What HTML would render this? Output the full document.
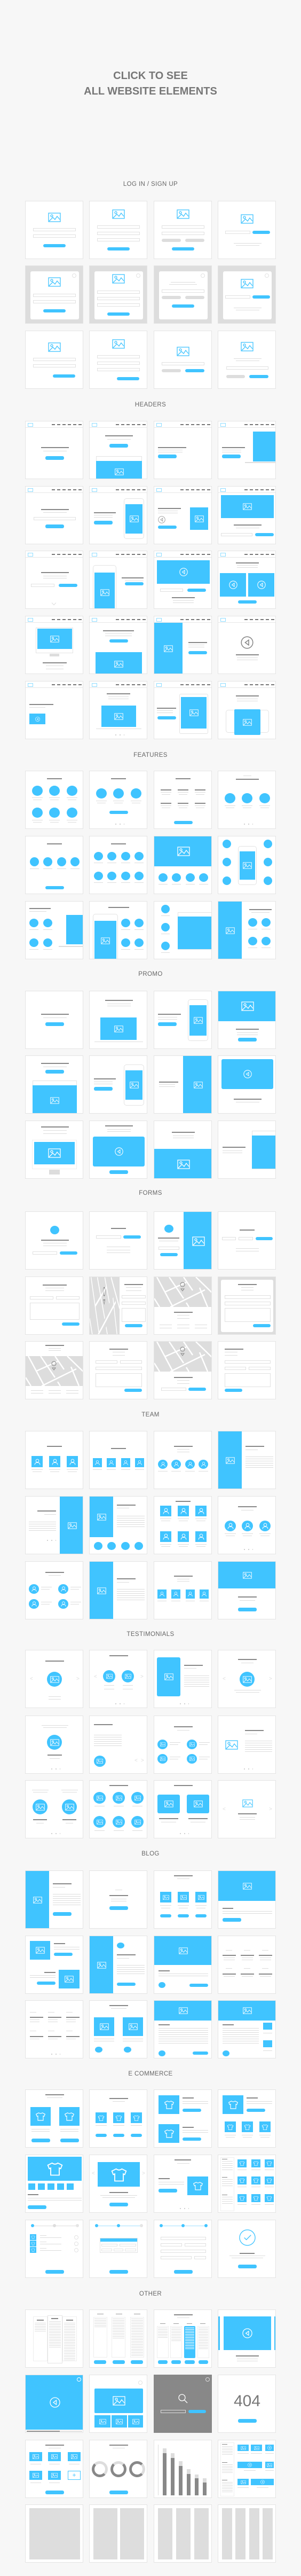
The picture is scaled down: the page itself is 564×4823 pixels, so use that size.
<!DOCTYPE html>
<html><head><meta charset="utf-8"><style>
*{margin:0;padding:0}
body{width:564px;height:4823px;background:#f7f7f7;position:relative;overflow:hidden;font-family:"Liberation Sans",sans-serif}
.h{position:absolute;left:0;width:564px;text-align:center;color:#777;font-weight:bold;font-size:20px;line-height:29px;top:128px}
.lb{position:absolute;left:0;width:564px;text-align:center;color:#666;font-size:11.5px;letter-spacing:.4px;line-height:14px}
.r{position:absolute;left:0;width:564px;height:109px}
.c{position:absolute;top:0;width:109px;height:109px;background:#fff;border:1px solid #e4e4e4;box-sizing:border-box;overflow:hidden}
.x1{left:47px}.x2{left:167px}.x3{left:288px}.x4{left:408px}
.c>*{position:absolute;box-sizing:border-box}
.t{height:2px;background:#888}
.s{height:1px;background:#dcdcdc}
.b{height:6px;border-radius:3px;background:#40c4ff}
.p{height:6px;border-radius:3px;background:#ddd}
.B{background:#40c4ff;display:flex;align-items:center;justify-content:center}
.o{border-radius:50%}
.f{border:1px solid #e0e0e0;height:6px;background:#fff}
.g{background:#ddd}
.k{border:1px solid #e3e3e3;border-radius:5px;background:#fff}
.w{border:1px solid #e3e3e3;background:#fff}
.n{left:0;top:0;width:100%;height:12px;border-bottom:1px solid #e6e6e6;background:repeating-linear-gradient(90deg,#777 0 6px,transparent 6px 10px) 49px 5px/56px 2px no-repeat}
.n::before{content:"";position:absolute;left:4px;top:3px;width:8px;height:5px;border:1px solid #8fdcff}
.ib{width:24px;height:18px;color:#40c4ff}
.im{width:17px;height:13px;color:#fff}
.iL{width:24px;height:18px;color:#fff}
.pl{width:16px;height:16px;color:#fff}
.pe{width:14px;height:14px;color:#fff}
.sh{width:20px;height:17px;color:#fff}
.x{width:8px;height:8px;border:1px solid #e2e2e2;border-radius:50%}
.pop{left:9px;top:10px;width:91px;height:90px;background:#fff;border-radius:3px}
.gray{background:#ddd}
.dt{height:2px;width:20px;background:radial-gradient(circle,#ccc 1px,transparent 1.2px) 0 0/8px 2px repeat-x;left:45px}
</style></head><body>
<svg width="0" height="0" style="position:absolute">
<symbol id="im" viewBox="0 0 24 18"><g fill="none" stroke="currentColor" stroke-width="1.3"><rect x="1" y="1" width="22" height="16"/><circle cx="7" cy="6" r="2"/><polyline points="2,16 9,9 13,13 17,7 22,13"/></g></symbol>
<symbol id="pl" viewBox="0 0 20 20"><g fill="none" stroke="currentColor" stroke-width="1.3"><circle cx="10" cy="10" r="9"/><path d="M12.5 6 L7 10 L12.5 14 Z"/></g></symbol>
<symbol id="pe" viewBox="0 0 20 20"><g fill="none" stroke="currentColor" stroke-width="1.4"><circle cx="10" cy="7" r="4"/><path d="M3 18 C3 13 7 12 10 12 S17 13 17 18"/></g></symbol>
<symbol id="sh" viewBox="0 0 24 20"><path fill="none" stroke="currentColor" stroke-width="1.4" d="M8 2 L2 5 L4 10 L6 9 V19 H18 V9 L20 10 L22 5 L16 2 Q12 5 8 2 Z"/></symbol>
<symbol id="map" viewBox="0 0 109 56" preserveAspectRatio="none"><rect width="109" height="56" fill="#ddd"/><g stroke="#fff" stroke-width="2.5" fill="none"><path d="M5 0 L35 56 M28 0 L55 40 M55 0 L72 25 M78 0 L109 30 M20 28 L60 10 M30 56 L95 24 M0 40 L10 56 M85 20 L100 56 M60 48 L65 56"/></g><path d="M53 18 a4 4 0 1 1 0.1 0 Z M53 26 l-3-4 h6z" fill="none" stroke="#888"/></symbol>
<symbol id="chk" viewBox="0 0 32 32"><g fill="none" stroke="#40c4ff" stroke-width="1.4"><circle cx="16" cy="16" r="15"/><path d="M10 16 L14 20 L23 11"/></g></symbol>
<symbol id="srch" viewBox="0 0 20 20"><g fill="none" stroke="#fff" stroke-width="1.3"><circle cx="8" cy="8" r="6"/><path d="M12.5 12.5 L18 18"/></g></symbol>
</svg>

<div class="h">CLICK TO SEE<br>ALL WEBSITE ELEMENTS</div>

<!-- LOGIN -->
<div class="lb" style="top:338px">LOG IN / SIGN UP</div>
<div class="r" style="top:376px">
<div class="c x1"><svg class="ib" style="left:42px;top:21px"><use href="#im"/></svg><i class="f" style="left:14px;top:50px;width:80px"></i><i class="f" style="left:14px;top:62px;width:80px"></i><i class="b" style="left:33px;top:80px;width:42px"></i></div>
<div class="c x2"><svg class="ib" style="left:42px;top:15px"><use href="#im"/></svg><i class="f" style="left:14px;top:45px;width:80px"></i><i class="f" style="left:14px;top:57px;width:80px"></i><i class="f" style="left:14px;top:69px;width:80px"></i><i class="b" style="left:33px;top:86px;width:42px"></i></div>
<div class="c x3"><svg class="ib" style="left:42px;top:15px"><use href="#im"/></svg><i class="f" style="left:14px;top:45px;width:80px"></i><i class="f" style="left:14px;top:57px;width:80px"></i><i class="p" style="left:14px;top:70px;width:36px"></i><i class="p" style="left:58px;top:70px;width:36px"></i><i class="b" style="left:33px;top:86px;width:42px"></i></div>
<div class="c x4"><svg class="ib" style="left:42px;top:24px"><use href="#im"/></svg><i class="f" style="left:13px;top:55px;width:47px"></i><i class="b" style="left:64px;top:55px;width:33px"></i><i class="s" style="left:29px;top:78px;width:52px"></i><i class="s" style="left:33px;top:82px;width:44px"></i></div>
</div>
<div class="r" style="top:497px">
<div class="c x1 gray"><i class="pop"></i><i class="x" style="left:87px;top:14px"></i><svg class="ib" style="left:42px;top:21px"><use href="#im"/></svg><i class="f" style="left:14px;top:52px;width:80px"></i><i class="f" style="left:14px;top:64px;width:80px"></i><i class="b" style="left:33px;top:81px;width:42px"></i></div>
<div class="c x2 gray"><i class="pop"></i><i class="x" style="left:87px;top:14px"></i><svg class="ib" style="left:42px;top:15px"><use href="#im"/></svg><i class="f" style="left:14px;top:46px;width:80px"></i><i class="f" style="left:14px;top:58px;width:80px"></i><i class="f" style="left:14px;top:70px;width:80px"></i><i class="b" style="left:33px;top:87px;width:42px"></i></div>
<div class="c x3 gray"><i class="pop"></i><i class="x" style="left:87px;top:14px"></i><i class="s" style="left:31px;top:30px;width:46px"></i><i class="s" style="left:28px;top:34px;width:52px"></i><i class="f" style="left:14px;top:44px;width:80px"></i><i class="p" style="left:14px;top:56px;width:36px"></i><i class="p" style="left:58px;top:56px;width:36px"></i><i class="b" style="left:33px;top:72px;width:42px"></i></div>
<div class="c x4 gray"><i class="pop"></i><i class="x" style="left:87px;top:14px"></i><svg class="ib" style="left:42px;top:24px"><use href="#im"/></svg><i class="f" style="left:13px;top:55px;width:47px"></i><i class="b" style="left:64px;top:55px;width:33px"></i><i class="s" style="left:29px;top:78px;width:52px"></i><i class="s" style="left:33px;top:82px;width:44px"></i></div>
</div>
<div class="r" style="top:619px">
<div class="c x1"><svg class="ib" style="left:42px;top:21px"><use href="#im"/></svg><i class="f" style="left:14px;top:50px;width:80px"></i><i class="f" style="left:14px;top:62px;width:80px"></i><i class="b" style="left:51px;top:81px;width:42px"></i></div>
<div class="c x2"><svg class="ib" style="left:42px;top:15px"><use href="#im"/></svg><i class="f" style="left:14px;top:45px;width:80px"></i><i class="f" style="left:14px;top:57px;width:80px"></i><i class="f" style="left:14px;top:69px;width:80px"></i><i class="b" style="left:51px;top:86px;width:42px"></i></div>
<div class="c x3"><svg class="ib" style="left:42px;top:29px"><use href="#im"/></svg><i class="f" style="left:14px;top:58px;width:80px"></i><i class="p" style="left:14px;top:71px;width:36px"></i><i class="b" style="left:58px;top:71px;width:36px"></i></div>
<div class="c x4"><svg class="ib" style="left:42px;top:20px"><use href="#im"/></svg><i class="s" style="left:29px;top:51px;width:52px"></i><i class="s" style="left:33px;top:55px;width:44px"></i><i class="f" style="left:15px;top:66px;width:79px"></i><i class="p" style="left:15px;top:82px;width:35px"></i><i class="b" style="left:58px;top:82px;width:36px"></i></div>
</div>

<!-- HEADERS -->
<div class="lb" style="top:751px">HEADERS</div>
<div class="r" style="top:788px">
<div class="c x1"><i class="n"></i><i class="t" style="left:29px;top:48px;width:52px"></i><i class="s" style="left:33px;top:55px;width:44px"></i><i class="b" style="left:37px;top:65px;width:35px;height:7px"></i></div>
<div class="c x2"><i class="n"></i><i class="t" style="left:29px;top:26px;width:52px"></i><i class="s" style="left:33px;top:33px;width:44px"></i><i class="b" style="left:37px;top:42px;width:35px;height:7px"></i><i class="w" style="left:12px;top:65px;width:86px;height:50px"></i><i class="B" style="left:12px;top:74px;width:86px;height:40px"><svg class="im"><use href="#im"/></svg></i></div>
<div class="c x3"><i class="n"></i><i class="t" style="left:7px;top:48px;width:53px"></i><i class="s" style="left:7px;top:53px;width:46px"></i><i class="s" style="left:7px;top:57px;width:46px"></i><i class="b" style="left:7px;top:62px;width:35px;height:7px"></i></div>
<div class="c x4"><i class="n"></i><i class="t" style="left:7px;top:48px;width:43px"></i><i class="s" style="left:7px;top:53px;width:36px"></i><i class="s" style="left:7px;top:57px;width:36px"></i><i class="b" style="left:7px;top:62px;width:35px;height:7px"></i><i class="B" style="left:65px;top:19px;width:45px;height:56px"></i><i class="g" style="left:50px;top:76px;width:60px;height:2px"></i></div>
</div>
<div class="r" style="top:910px">
<div class="c x1"><i class="n"></i><i class="t" style="left:29px;top:42px;width:52px"></i><i class="s" style="left:33px;top:48px;width:44px"></i><i class="f" style="left:15px;top:57px;width:79px"></i><i class="b" style="left:37px;top:71px;width:35px;height:7px"></i></div>
<div class="c x2"><i class="n"></i><i class="t" style="left:8px;top:48px;width:41px"></i><i class="s" style="left:8px;top:53px;width:35px"></i><i class="s" style="left:8px;top:57px;width:35px"></i><i class="b" style="left:8px;top:64px;width:35px;height:7px"></i><i class="k" style="left:64px;top:22px;width:38px;height:76px"></i><i class="B" style="left:67px;top:33px;width:32px;height:55px"><svg class="im"><use href="#im"/></svg></i></div>
<div class="c x3"><i class="n"></i><i class="t" style="left:7px;top:40px;width:43px"></i><i class="s" style="left:7px;top:45px;width:37px"></i><i class="s" style="left:7px;top:49px;width:37px"></i><svg class="pl" style="left:7px;top:55px;width:14px;height:14px;color:#999"><use href="#pl"/></svg><i class="b" style="left:7px;top:73px;width:35px"></i><i class="B" style="left:67px;top:39px;width:34px;height:42px"><svg class="im"><use href="#im"/></svg></i></div>
<div class="c x4"><i class="n"></i><i class="B" style="left:5px;top:16px;width:99px;height:43px"><svg class="im"><use href="#im"/></svg></i><i class="t" style="left:29px;top:71px;width:52px"></i><i class="s" style="left:33px;top:77px;width:44px"></i><i class="f" style="left:5px;top:87px;width:59px"></i><i class="b" style="left:69px;top:87px;width:35px"></i></div>
</div>
<div class="r" style="top:1031px">
<div class="c x1"><i class="n"></i><i class="t" style="left:29px;top:39px;width:52px"></i><i class="s" style="left:33px;top:46px;width:44px"></i><i class="s" style="left:33px;top:50px;width:44px"></i><i class="f" style="left:10px;top:61px;width:44px"></i><i class="b" style="left:62px;top:61px;width:35px"></i><i style="left:50px;top:94px;width:6px;height:6px;border-right:1px solid #ddd;border-bottom:1px solid #ddd;transform:rotate(45deg)"></i></div>
<div class="c x2"><i class="n"></i><i class="k" style="left:6px;top:26px;width:44px;height:90px"></i><i class="B" style="left:9px;top:40px;width:38px;height:75px"><svg class="im"><use href="#im"/></svg></i><i class="t" style="left:60px;top:49px;width:41px"></i><i class="s" style="left:66px;top:55px;width:35px"></i><i class="b" style="left:66px;top:58px;width:35px"></i></div>
<div class="c x3"><i class="n"></i><i class="B" style="left:5px;top:17px;width:99px;height:44px"><svg class="pl"><use href="#pl"/></svg></i><i class="f" style="left:11px;top:70px;width:43px"></i><i class="b" style="left:62px;top:70px;width:35px"></i><i class="t" style="left:33px;top:86px;width:43px"></i><i class="s" style="left:35px;top:92px;width:39px"></i><i class="s" style="left:35px;top:96px;width:39px"></i></div>
<div class="c x4"><i class="n"></i><i class="t" style="left:33px;top:21px;width:43px"></i><i class="s" style="left:35px;top:26px;width:39px"></i><i class="s" style="left:35px;top:30px;width:39px"></i><i class="B" style="left:3px;top:41px;width:49px;height:44px"><svg class="pl"><use href="#pl"/></svg></i><i class="B" style="left:56px;top:41px;width:49px;height:44px"><svg class="pl"><use href="#pl"/></svg></i><i class="b" style="left:37px;top:92px;width:35px"></i></div>
</div>
<div class="r" style="top:1153px">
<div class="c x1"><i class="n"></i><i class="w" style="left:19px;top:21px;width:70px;height:48px"></i><i class="B" style="left:22px;top:23px;width:65px;height:38px"><svg class="im"><use href="#im"/></svg></i><i class="g" style="left:45px;top:70px;width:18px;height:5px"></i><i class="t" style="left:32px;top:86px;width:45px"></i><i class="s" style="left:38px;top:92px;width:33px"></i><i class="s" style="left:38px;top:98px;width:33px"></i></div>
<div class="c x2"><i class="n"></i><i class="t" style="left:25px;top:26px;width:58px"></i><i class="s" style="left:29px;top:32px;width:50px"></i><i class="s" style="left:29px;top:36px;width:50px"></i><i class="b" style="left:37px;top:43px;width:35px"></i><i class="B" style="left:11px;top:67px;width:87px;height:44px"><svg class="im"><use href="#im"/></svg></i></div>
<div class="c x3"><i class="n"></i><i class="B" style="left:0;top:12px;width:53px;height:97px"><svg class="im"><use href="#im"/></svg></i><i class="t" style="left:64px;top:48px;width:35px"></i><i class="s" style="left:64px;top:53px;width:30px"></i><i class="s" style="left:64px;top:57px;width:30px"></i><i class="b" style="left:64px;top:65px;width:35px"></i></div>
<div class="c x4"><i class="n"></i><svg style="left:42px;top:37px;width:24px;height:24px;color:#888"><use href="#pl"/></svg><i class="t" style="left:33px;top:71px;width:43px"></i><i class="s" style="left:35px;top:77px;width:39px"></i><i class="s" style="left:35px;top:81px;width:39px"></i></div>
</div>
<div class="r" style="top:1275px">
<div class="c x1"><i class="n"></i><i class="t" style="left:7px;top:42px;width:45px"></i><i class="s" style="left:7px;top:48px;width:30px"></i><i class="B" style="left:7px;top:60px;width:30px;height:20px"><svg class="pl" style="width:9px;height:9px"><use href="#pl"/></svg></i></div>
<div class="c x2"><i class="n"></i><i class="t" style="left:32px;top:22px;width:44px"></i><i class="s" style="left:35px;top:28px;width:38px"></i><i class="s" style="left:35px;top:32px;width:38px"></i><i class="B" style="left:22px;top:45px;width:65px;height:40px"><svg class="im"><use href="#im"/></svg></i><i class="s" style="left:12px;top:88px;width:85px"></i><i class="dt" style="top:99px"></i></div>
<div class="c x3"><i class="n"></i><i class="t" style="left:5px;top:49px;width:36px"></i><i class="s" style="left:5px;top:54px;width:30px"></i><i class="s" style="left:5px;top:58px;width:30px"></i><i class="b" style="left:6px;top:65px;width:35px"></i><i class="k" style="left:47px;top:23px;width:54px;height:75px;border-radius:3px"></i><i class="B" style="left:50px;top:29px;width:48px;height:59px"><svg class="im"><use href="#im"/></svg></i></div>
<div class="c x4"><i class="n"></i><i class="t" style="left:33px;top:26px;width:43px"></i><i class="s" style="left:35px;top:32px;width:39px"></i><i class="s" style="left:35px;top:36px;width:39px"></i><i class="k" style="left:14px;top:53px;width:81px;height:43px"></i><i class="B" style="left:30px;top:52px;width:49px;height:48px;border-radius:2px"><svg class="im"><use href="#im"/></svg></i></div>
</div>

<!-- FEATURES -->
<div class="lb" style="top:1407px">FEATURES</div>
<div class="r" style="top:1443px">
<div class="c x1"><i class="t" style="left:40px;top:13px;width:28px"></i>
<i class="B o" style="left:12px;top:27px;width:20px;height:19px"></i><i class="B o" style="left:44px;top:27px;width:20px;height:19px"></i><i class="B o" style="left:77px;top:27px;width:20px;height:19px"></i>
<i class="s" style="left:12px;top:49px;width:20px"></i><i class="s" style="left:44px;top:49px;width:20px"></i><i class="s" style="left:77px;top:49px;width:20px"></i><i class="s" style="left:14px;top:53px;width:16px"></i><i class="s" style="left:46px;top:53px;width:16px"></i><i class="s" style="left:79px;top:53px;width:16px"></i>
<i class="B o" style="left:12px;top:68px;width:20px;height:19px"></i><i class="B o" style="left:44px;top:68px;width:20px;height:19px"></i><i class="B o" style="left:77px;top:68px;width:20px;height:19px"></i>
<i class="s" style="left:12px;top:91px;width:20px"></i><i class="s" style="left:44px;top:91px;width:20px"></i><i class="s" style="left:77px;top:91px;width:20px"></i><i class="s" style="left:14px;top:95px;width:16px"></i><i class="s" style="left:46px;top:95px;width:16px"></i><i class="s" style="left:79px;top:95px;width:16px"></i></div>
<div class="c x2"><i class="t" style="left:40px;top:13px;width:28px"></i><i class="B o" style="left:12px;top:32px;width:20px;height:19px"></i><i class="B o" style="left:44px;top:32px;width:20px;height:19px"></i><i class="B o" style="left:77px;top:32px;width:20px;height:19px"></i><i class="s" style="left:12px;top:55px;width:20px"></i><i class="s" style="left:44px;top:55px;width:20px"></i><i class="s" style="left:77px;top:55px;width:20px"></i><i class="s" style="left:14px;top:59px;width:16px"></i><i class="s" style="left:46px;top:59px;width:16px"></i><i class="s" style="left:79px;top:59px;width:16px"></i><i class="b" style="left:37px;top:74px;width:35px"></i><i class="dt" style="top:98px"></i></div>
<div class="c x3"><i class="t" style="left:40px;top:13px;width:28px"></i><i class="t" style="left:12px;top:34px;width:20px"></i><i class="t" style="left:44px;top:34px;width:20px"></i><i class="t" style="left:76px;top:34px;width:20px"></i><i class="s" style="left:12px;top:39px;width:20px"></i><i class="s" style="left:44px;top:39px;width:20px"></i><i class="s" style="left:76px;top:39px;width:20px"></i><i class="s" style="left:14px;top:43px;width:16px"></i><i class="s" style="left:46px;top:43px;width:16px"></i><i class="s" style="left:78px;top:43px;width:16px"></i><i class="t" style="left:12px;top:59px;width:20px"></i><i class="t" style="left:44px;top:59px;width:20px"></i><i class="t" style="left:76px;top:59px;width:20px"></i><i class="s" style="left:12px;top:64px;width:20px"></i><i class="s" style="left:44px;top:64px;width:20px"></i><i class="s" style="left:76px;top:64px;width:20px"></i><i class="s" style="left:14px;top:68px;width:16px"></i><i class="s" style="left:46px;top:68px;width:16px"></i><i class="s" style="left:78px;top:68px;width:16px"></i><i class="b" style="left:37px;top:93px;width:35px"></i></div>
<div class="c x4"><i class="s" style="left:47px;top:8px;width:15px"></i><i class="t" style="left:33px;top:14px;width:43px"></i><i class="B o" style="left:12px;top:41px;width:20px;height:19px"></i><i class="B o" style="left:44px;top:41px;width:20px;height:19px"></i><i class="B o" style="left:77px;top:41px;width:20px;height:19px"></i><i class="s" style="left:12px;top:64px;width:20px"></i><i class="s" style="left:44px;top:64px;width:20px"></i><i class="s" style="left:77px;top:64px;width:20px"></i><i class="s" style="left:14px;top:68px;width:16px"></i><i class="s" style="left:46px;top:68px;width:16px"></i><i class="s" style="left:79px;top:68px;width:16px"></i><i class="dt" style="top:98px"></i></div>
</div>
<div class="r" style="top:1565px">
<div class="c x1"><i class="t" style="left:40px;top:13px;width:28px"></i><i class="B o" style="left:8px;top:39px;width:17px;height:17px"></i><i class="B o" style="left:33px;top:39px;width:17px;height:17px"></i><i class="B o" style="left:59px;top:39px;width:17px;height:17px"></i><i class="B o" style="left:84px;top:39px;width:17px;height:17px"></i><i class="s" style="left:8px;top:60px;width:17px"></i><i class="s" style="left:33px;top:60px;width:17px"></i><i class="s" style="left:59px;top:60px;width:17px"></i><i class="s" style="left:84px;top:60px;width:17px"></i><i class="b" style="left:37px;top:93px;width:35px"></i></div>
<div class="c x2"><i class="t" style="left:40px;top:13px;width:28px"></i><i class="B o" style="left:8px;top:29px;width:17px;height:16px"></i><i class="B o" style="left:33px;top:29px;width:17px;height:16px"></i><i class="B o" style="left:59px;top:29px;width:17px;height:16px"></i><i class="B o" style="left:84px;top:29px;width:17px;height:16px"></i><i class="s" style="left:8px;top:49px;width:17px"></i><i class="s" style="left:33px;top:49px;width:17px"></i><i class="s" style="left:59px;top:49px;width:17px"></i><i class="s" style="left:84px;top:49px;width:17px"></i><i class="B o" style="left:8px;top:66px;width:17px;height:16px"></i><i class="B o" style="left:33px;top:66px;width:17px;height:16px"></i><i class="B o" style="left:59px;top:66px;width:17px;height:16px"></i><i class="B o" style="left:84px;top:66px;width:17px;height:16px"></i><i class="s" style="left:8px;top:86px;width:17px"></i><i class="s" style="left:33px;top:86px;width:17px"></i><i class="s" style="left:59px;top:86px;width:17px"></i><i class="s" style="left:84px;top:86px;width:17px"></i></div>
<div class="c x3"><i class="B" style="left:0;top:0;width:109px;height:56px"><svg class="iL"><use href="#im"/></svg></i><i class="B o" style="left:8px;top:69px;width:17px;height:16px"></i><i class="B o" style="left:33px;top:69px;width:17px;height:16px"></i><i class="B o" style="left:59px;top:69px;width:17px;height:16px"></i><i class="B o" style="left:84px;top:69px;width:17px;height:16px"></i><i class="s" style="left:8px;top:89px;width:17px"></i><i class="s" style="left:33px;top:89px;width:17px"></i><i class="s" style="left:59px;top:89px;width:17px"></i><i class="s" style="left:84px;top:89px;width:17px"></i></div>
<div class="c x4"><i class="k" style="left:37px;top:18px;width:35px;height:73px"></i><i class="B" style="left:40px;top:28px;width:29px;height:53px"><svg class="im"><use href="#im"/></svg></i><i class="B o" style="left:8px;top:6px;width:16px;height:16px"></i><i class="B o" style="left:8px;top:40px;width:16px;height:16px"></i><i class="B o" style="left:8px;top:75px;width:16px;height:16px"></i><i class="B o" style="left:85px;top:6px;width:16px;height:16px"></i><i class="B o" style="left:85px;top:40px;width:16px;height:16px"></i><i class="B o" style="left:85px;top:75px;width:16px;height:16px"></i></div>
</div>
<div class="r" style="top:1687px">
<div class="c x1"><i class="t" style="left:7px;top:12px;width:40px"></i><i class="s" style="left:7px;top:18px;width:32px"></i><i class="B o" style="left:7px;top:32px;width:17px;height:16px"></i><i class="B o" style="left:33px;top:32px;width:17px;height:16px"></i><i class="B o" style="left:7px;top:69px;width:17px;height:16px"></i><i class="B o" style="left:33px;top:69px;width:17px;height:16px"></i><i class="s" style="left:7px;top:52px;width:17px"></i><i class="s" style="left:33px;top:52px;width:17px"></i><i class="s" style="left:7px;top:89px;width:17px"></i><i class="s" style="left:33px;top:89px;width:17px"></i><i class="B" style="left:76px;top:25px;width:34px;height:55px"></i><i class="g" style="left:62px;top:83px;width:48px;height:2px"></i></div>
<div class="c x2"><i class="k" style="left:6px;top:23px;width:47px;height:95px"></i><i class="B" style="left:9px;top:36px;width:41px;height:75px"><svg class="im"><use href="#im"/></svg></i><i class="t" style="left:35px;top:10px;width:39px"></i><i class="B o" style="left:59px;top:32px;width:17px;height:16px"></i><i class="B o" style="left:84px;top:32px;width:17px;height:16px"></i><i class="B o" style="left:59px;top:69px;width:17px;height:16px"></i><i class="B o" style="left:84px;top:69px;width:17px;height:16px"></i><i class="s" style="left:59px;top:52px;width:17px"></i><i class="s" style="left:84px;top:52px;width:17px"></i><i class="s" style="left:59px;top:89px;width:17px"></i><i class="s" style="left:84px;top:89px;width:17px"></i></div>
<div class="c x3"><i class="B o" style="left:13px;top:6px;width:16px;height:16px"></i><i class="B o" style="left:13px;top:40px;width:16px;height:16px"></i><i class="B o" style="left:13px;top:75px;width:16px;height:16px"></i><i class="s" style="left:13px;top:26px;width:16px"></i><i class="s" style="left:13px;top:60px;width:16px"></i><i class="s" style="left:13px;top:95px;width:16px"></i><i class="w" style="left:44px;top:20px;width:66px;height:70px"></i><i class="B" style="left:44px;top:28px;width:66px;height:61px"></i></div>
<div class="c x4"><i class="B" style="left:0;top:0;width:44px;height:109px"><svg class="im"><use href="#im"/></svg></i><i class="t" style="left:58px;top:14px;width:42px"></i><i class="s" style="left:62px;top:20px;width:34px"></i><i class="B o" style="left:56px;top:31px;width:17px;height:16px"></i><i class="B o" style="left:81px;top:31px;width:17px;height:16px"></i><i class="B o" style="left:56px;top:66px;width:17px;height:16px"></i><i class="B o" style="left:81px;top:66px;width:17px;height:16px"></i><i class="s" style="left:56px;top:51px;width:17px"></i><i class="s" style="left:81px;top:51px;width:17px"></i><i class="s" style="left:56px;top:86px;width:17px"></i><i class="s" style="left:81px;top:86px;width:17px"></i></div>
</div>

<!-- PROMO -->
<div class="lb" style="top:1817px">PROMO</div>
<div class="r" style="top:1855px">
<div class="c x1"><i class="t" style="left:29px;top:42px;width:52px"></i><i class="s" style="left:33px;top:49px;width:44px"></i><i class="b" style="left:37px;top:58px;width:35px;height:7px"></i></div>
<div class="c x2"><i class="t" style="left:29px;top:16px;width:52px"></i><i class="s" style="left:33px;top:23px;width:44px"></i><i class="s" style="left:33px;top:27px;width:44px"></i><i class="B" style="left:20px;top:49px;width:68px;height:42px"><svg class="im"><use href="#im"/></svg></i><i class="g" style="left:9px;top:94px;width:91px;height:1px"></i></div>
<div class="c x3"><i class="t" style="left:7px;top:42px;width:43px"></i><i class="s" style="left:7px;top:48px;width:36px"></i><i class="s" style="left:7px;top:52px;width:36px"></i><i class="b" style="left:7px;top:58px;width:35px;height:7px"></i><i class="k" style="left:63px;top:15px;width:38px;height:78px"></i><i class="B" style="left:66px;top:26px;width:32px;height:57px"><svg class="im"><use href="#im"/></svg></i></div>
<div class="c x4"><i class="B" style="left:0;top:0;width:109px;height:56px"><svg class="iL"><use href="#im"/></svg></i><i class="t" style="left:33px;top:70px;width:43px"></i><i class="s" style="left:35px;top:77px;width:39px"></i><i class="s" style="left:35px;top:81px;width:39px"></i><i class="b" style="left:37px;top:87px;width:35px;height:7px"></i></div>
</div>
<div class="r" style="top:1976px">
<div class="c x1"><i class="t" style="left:29px;top:13px;width:52px"></i><i class="s" style="left:33px;top:20px;width:44px"></i><i class="b" style="left:37px;top:26px;width:35px;height:7px"></i><i class="w" style="left:13px;top:46px;width:83px;height:66px"></i><i class="B" style="left:13px;top:55px;width:83px;height:56px"><svg class="im"><use href="#im"/></svg></i></div>
<div class="c x2"><i class="t" style="left:8px;top:42px;width:41px"></i><i class="s" style="left:8px;top:48px;width:35px"></i><i class="s" style="left:8px;top:52px;width:35px"></i><i class="b" style="left:8px;top:58px;width:35px;height:7px"></i><i class="k" style="left:64px;top:16px;width:38px;height:77px"></i><i class="B" style="left:67px;top:27px;width:32px;height:55px"><svg class="im"><use href="#im"/></svg></i></div>
<div class="c x3"><i class="t" style="left:9px;top:48px;width:36px"></i><i class="s" style="left:9px;top:53px;width:30px"></i><i class="s" style="left:9px;top:57px;width:30px"></i><i class="B" style="left:54px;top:0;width:56px;height:109px"><svg class="im"><use href="#im"/></svg></i></div>
<div class="c x4"><i class="B" style="left:6px;top:6px;width:97px;height:56px;border-radius:3px"><svg class="pl"><use href="#pl"/></svg></i><i class="t" style="left:29px;top:80px;width:52px"></i><i class="s" style="left:33px;top:86px;width:44px"></i></div>
</div>
<div class="r" style="top:2098px">
<div class="c x1"><i class="t" style="left:29px;top:10px;width:52px"></i><i class="s" style="left:33px;top:17px;width:44px"></i><i class="s" style="left:33px;top:23px;width:44px"></i><i class="w" style="left:12px;top:35px;width:84px;height:55px;border-color:#eee"></i><i class="B" style="left:16px;top:39px;width:76px;height:42px"><svg class="iL"><use href="#im"/></svg></i><i class="g" style="left:44px;top:91px;width:20px;height:9px"></i></div>
<div class="c x2"><i class="t" style="left:29px;top:8px;width:52px"></i><i class="s" style="left:33px;top:15px;width:44px"></i><i class="s" style="left:33px;top:19px;width:44px"></i><i class="B" style="left:6px;top:29px;width:97px;height:56px;border-radius:3px"><svg class="pl"><use href="#pl"/></svg></i><i class="b" style="left:37px;top:92px;width:35px;height:7px"></i></div>
<div class="c x3"><i class="t" style="left:33px;top:20px;width:43px"></i><i class="s" style="left:35px;top:27px;width:39px"></i><i class="s" style="left:35px;top:31px;width:39px"></i><i class="B" style="left:0;top:52px;width:109px;height:57px"><svg class="iL"><use href="#im"/></svg></i></div>
<div class="c x4"><i class="w" style="left:63px;top:18px;width:47px;height:72px"></i><i class="B" style="left:63px;top:27px;width:47px;height:62px"></i><i class="t" style="left:8px;top:48px;width:43px"></i><i class="s" style="left:8px;top:55px;width:37px"></i><i class="s" style="left:8px;top:59px;width:37px"></i></div>
</div>

<!-- FORMS -->
<div class="lb" style="top:2227px">FORMS</div>
<div class="r" style="top:2268px">
<div class="c x1"><i class="B o" style="left:46px;top:26px;width:17px;height:16px"></i><i class="t" style="left:29px;top:52px;width:52px"></i><i class="s" style="left:33px;top:58px;width:44px"></i><i class="s" style="left:33px;top:63px;width:44px"></i><i class="f" style="left:13px;top:74px;width:46px"></i><i class="b" style="left:64px;top:74px;width:33px"></i></div>
<div class="c x2"><i class="t" style="left:40px;top:30px;width:28px"></i><i class="f" style="left:12px;top:44px;width:47px"></i><i class="b" style="left:63px;top:44px;width:33px"></i><i class="s" style="left:32px;top:65px;width:44px"></i><i class="s" style="left:32px;top:71px;width:44px"></i><i class="s" style="left:32px;top:76px;width:44px"></i></div>
<div class="c x3"><i class="B" style="left:55px;top:0;width:55px;height:109px"><svg class="iL"><use href="#im"/></svg></i><i class="B o" style="left:19px;top:24px;width:17px;height:15px"></i><i class="t" style="left:7px;top:48px;width:40px"></i><i class="s" style="left:9px;top:54px;width:36px"></i><i class="f" style="left:8px;top:65px;width:39px"></i><i class="b" style="left:11px;top:77px;width:33px"></i></div>
<div class="c x4"><i class="t" style="left:40px;top:33px;width:28px"></i><i class="f" style="left:7px;top:47px;width:26px"></i><i class="f" style="left:38px;top:47px;width:27px"></i><i class="b" style="left:70px;top:47px;width:32px"></i><i class="s" style="left:33px;top:68px;width:43px"></i><i class="s" style="left:33px;top:73px;width:43px"></i></div>
</div>
<div class="r" style="top:2390px">
<div class="c x1"><i class="t" style="left:32px;top:14px;width:45px"></i><i class="s" style="left:37px;top:20px;width:35px"></i><i class="s" style="left:37px;top:25px;width:35px"></i><i class="f" style="left:8px;top:36px;width:44px"></i><i class="f" style="left:57px;top:36px;width:44px"></i><i class="f" style="left:8px;top:48px;width:93px;height:32px"></i><i class="b" style="left:68px;top:85px;width:33px"></i></div>
<div class="c x2"><svg style="left:0;top:0;width:56px;height:109px"><use href="#map"/></svg><i class="t" style="left:65px;top:13px;width:35px"></i><i class="s" style="left:68px;top:19px;width:29px"></i><i class="s" style="left:68px;top:25px;width:29px"></i><i class="f" style="left:60px;top:34px;width:45px"></i><i class="f" style="left:60px;top:46px;width:45px"></i><i class="f" style="left:60px;top:58px;width:45px;height:26px"></i><i class="b" style="left:66px;top:88px;width:33px"></i></div>
<div class="c x3"><svg style="left:0;top:0;width:109px;height:56px"><use href="#map"/></svg><i class="t" style="left:37px;top:65px;width:35px"></i><i class="s" style="left:43px;top:71px;width:23px"></i><i class="s" style="left:43px;top:77px;width:23px"></i><i class="s" style="left:10px;top:89px;width:23px"></i><i class="s" style="left:43px;top:89px;width:23px"></i><i class="s" style="left:76px;top:89px;width:23px"></i><i class="s" style="left:10px;top:95px;width:23px"></i><i class="s" style="left:43px;top:95px;width:23px"></i><i class="s" style="left:76px;top:95px;width:23px"></i></div>
<div class="c x4 gray"><i style="left:5px;top:5px;width:98px;height:98px;background:#fff;border-radius:3px"></i><i class="t" style="left:37px;top:13px;width:35px"></i><i class="s" style="left:43px;top:19px;width:23px"></i><i class="s" style="left:43px;top:24px;width:23px"></i><i class="f" style="left:12px;top:34px;width:86px;height:7px"></i><i class="f" style="left:12px;top:46px;width:86px;height:7px"></i><i class="f" style="left:12px;top:58px;width:86px;height:26px"></i><i class="b" style="left:65px;top:88px;width:33px"></i></div>
</div>
<div class="r" style="top:2511px">
<div class="c x1"><i class="t" style="left:37px;top:6px;width:35px"></i><i class="s" style="left:43px;top:12px;width:23px"></i><i class="s" style="left:43px;top:16px;width:23px"></i><svg style="left:0;top:27px;width:109px;height:56px"><use href="#map"/></svg><i class="s" style="left:10px;top:91px;width:23px"></i><i class="s" style="left:43px;top:91px;width:23px"></i><i class="s" style="left:76px;top:91px;width:23px"></i><i class="s" style="left:10px;top:96px;width:23px"></i><i class="s" style="left:43px;top:96px;width:23px"></i><i class="s" style="left:76px;top:96px;width:23px"></i></div>
<div class="c x2"><i class="t" style="left:37px;top:13px;width:35px"></i><i class="s" style="left:43px;top:19px;width:23px"></i><i class="s" style="left:43px;top:25px;width:23px"></i><i class="f" style="left:11px;top:35px;width:41px"></i><i class="f" style="left:57px;top:35px;width:41px"></i><i class="f" style="left:11px;top:47px;width:87px"></i><i class="f" style="left:11px;top:59px;width:87px;height:26px"></i><i class="b" style="left:65px;top:88px;width:33px"></i></div>
<div class="c x3"><svg style="left:0;top:0;width:109px;height:56px"><use href="#map"/></svg><i class="t" style="left:37px;top:66px;width:35px"></i><i class="s" style="left:43px;top:72px;width:23px"></i><i class="s" style="left:43px;top:78px;width:23px"></i><i class="f" style="left:13px;top:86px;width:47px"></i><i class="b" style="left:64px;top:86px;width:33px"></i></div>
<div class="c x4"><i class="t" style="left:12px;top:13px;width:35px"></i><i class="s" style="left:12px;top:19px;width:24px"></i><i class="s" style="left:12px;top:25px;width:24px"></i><i class="f" style="left:12px;top:35px;width:86px"></i><i class="f" style="left:12px;top:47px;width:40px"></i><i class="f" style="left:57px;top:47px;width:41px"></i><i class="f" style="left:12px;top:59px;width:86px;height:26px"></i><i class="b" style="left:12px;top:88px;width:33px"></i></div>
</div>

<!-- TEAM -->
<div class="lb" style="top:2642px">TEAM</div>
<div class="r" style="top:2679px">
<div class="c x1"><i class="t" style="left:40px;top:27px;width:28px"></i><i class="B" style="left:11px;top:46px;width:21px;height:21px"><svg class="pe"><use href="#pe"/></svg></i><i class="B" style="left:44px;top:46px;width:21px;height:21px"><svg class="pe"><use href="#pe"/></svg></i><i class="B" style="left:77px;top:46px;width:21px;height:21px"><svg class="pe"><use href="#pe"/></svg></i><i class="s" style="left:11px;top:71px;width:21px"></i><i class="s" style="left:44px;top:71px;width:21px"></i><i class="s" style="left:77px;top:71px;width:21px"></i><i class="s" style="left:13px;top:75px;width:17px"></i><i class="s" style="left:46px;top:75px;width:17px"></i><i class="s" style="left:79px;top:75px;width:17px"></i></div>
<div class="c x2"><i class="t" style="left:40px;top:31px;width:28px"></i><i class="B" style="left:6px;top:50px;width:17px;height:17px"><svg class="pe" style="width:11px;height:11px"><use href="#pe"/></svg></i><i class="B" style="left:32px;top:50px;width:17px;height:17px"><svg class="pe" style="width:11px;height:11px"><use href="#pe"/></svg></i><i class="B" style="left:59px;top:50px;width:17px;height:17px"><svg class="pe" style="width:11px;height:11px"><use href="#pe"/></svg></i><i class="B" style="left:85px;top:50px;width:17px;height:17px"><svg class="pe" style="width:11px;height:11px"><use href="#pe"/></svg></i><i class="s" style="left:6px;top:71px;width:17px"></i><i class="s" style="left:32px;top:71px;width:17px"></i><i class="s" style="left:59px;top:71px;width:17px"></i><i class="s" style="left:85px;top:71px;width:17px"></i></div>
<div class="c x3"><i class="t" style="left:37px;top:27px;width:35px"></i><i class="s" style="left:43px;top:33px;width:23px"></i><i class="s" style="left:43px;top:38px;width:23px"></i><i class="B o" style="left:7px;top:53px;width:18px;height:17px"><svg class="pe" style="width:11px;height:11px"><use href="#pe"/></svg></i><i class="B o" style="left:32px;top:53px;width:18px;height:17px"><svg class="pe" style="width:11px;height:11px"><use href="#pe"/></svg></i><i class="B o" style="left:58px;top:53px;width:18px;height:17px"><svg class="pe" style="width:11px;height:11px"><use href="#pe"/></svg></i><i class="B o" style="left:83px;top:53px;width:18px;height:17px"><svg class="pe" style="width:11px;height:11px"><use href="#pe"/></svg></i><i class="s" style="left:7px;top:74px;width:18px"></i><i class="s" style="left:32px;top:74px;width:18px"></i><i class="s" style="left:58px;top:74px;width:18px"></i><i class="s" style="left:83px;top:74px;width:18px"></i></div>
<div class="c x4"><i class="B" style="left:0;top:0;width:44px;height:109px"><svg class="im"><use href="#im"/></svg></i><i class="t" style="left:51px;top:27px;width:35px"></i><i class="s" style="left:51px;top:34px;width:23px"></i><i class="s" style="left:51px;top:47px;width:52px"></i><i class="s" style="left:51px;top:51px;width:52px"></i><i class="s" style="left:51px;top:55px;width:52px"></i><i class="s" style="left:51px;top:59px;width:52px"></i><i class="s" style="left:51px;top:63px;width:52px"></i><i class="s" style="left:51px;top:67px;width:52px"></i></div>
</div>
<div class="r" style="top:2801px">
<div class="c x1"><i class="t" style="left:22px;top:26px;width:35px"></i><i class="s" style="left:35px;top:33px;width:22px"></i><i class="s" style="left:6px;top:47px;width:51px"></i><i class="s" style="left:6px;top:51px;width:51px"></i><i class="s" style="left:6px;top:55px;width:51px"></i><i class="s" style="left:6px;top:59px;width:51px"></i><i class="s" style="left:6px;top:63px;width:51px"></i><i class="dt" style="left:37px;top:81px"></i><i class="B" style="left:64px;top:0;width:46px;height:109px"><svg class="im"><use href="#im"/></svg></i></div>
<div class="c x2"><i class="B" style="left:0;top:0;width:44px;height:76px"><svg class="im"><use href="#im"/></svg></i><i class="t" style="left:51px;top:15px;width:35px"></i><i class="s" style="left:51px;top:21px;width:23px"></i><i class="s" style="left:51px;top:36px;width:52px"></i><i class="s" style="left:51px;top:40px;width:52px"></i><i class="s" style="left:51px;top:44px;width:52px"></i><i class="s" style="left:51px;top:48px;width:52px"></i><i class="s" style="left:51px;top:52px;width:52px"></i><i class="s" style="left:51px;top:56px;width:52px"></i><i class="B o" style="left:8px;top:85px;width:16px;height:15px"></i><i class="B o" style="left:33px;top:85px;width:16px;height:15px"></i><i class="B o" style="left:59px;top:85px;width:16px;height:15px"></i><i class="B o" style="left:84px;top:85px;width:16px;height:15px"></i></div>
<div class="c x3"><i class="t" style="left:40px;top:8px;width:28px"></i><i class="B" style="left:11px;top:17px;width:21px;height:20px"><svg class="pe"><use href="#pe"/></svg></i><i class="B" style="left:44px;top:17px;width:21px;height:20px"><svg class="pe"><use href="#pe"/></svg></i><i class="B" style="left:77px;top:17px;width:21px;height:20px"><svg class="pe"><use href="#pe"/></svg></i><i class="s" style="left:11px;top:41px;width:21px"></i><i class="s" style="left:44px;top:41px;width:21px"></i><i class="s" style="left:77px;top:41px;width:21px"></i><i class="s" style="left:13px;top:45px;width:17px"></i><i class="s" style="left:46px;top:45px;width:17px"></i><i class="s" style="left:79px;top:45px;width:17px"></i><i class="B" style="left:11px;top:65px;width:21px;height:20px"><svg class="pe"><use href="#pe"/></svg></i><i class="B" style="left:44px;top:65px;width:21px;height:20px"><svg class="pe"><use href="#pe"/></svg></i><i class="B" style="left:77px;top:65px;width:21px;height:20px"><svg class="pe"><use href="#pe"/></svg></i><i class="s" style="left:11px;top:89px;width:21px"></i><i class="s" style="left:44px;top:89px;width:21px"></i><i class="s" style="left:77px;top:89px;width:21px"></i><i class="s" style="left:13px;top:93px;width:17px"></i><i class="s" style="left:46px;top:93px;width:17px"></i><i class="s" style="left:79px;top:93px;width:17px"></i></div>
<div class="c x4"><i class="t" style="left:37px;top:18px;width:35px"></i><i class="s" style="left:43px;top:25px;width:23px"></i><i class="B o" style="left:12px;top:45px;width:21px;height:20px"><svg class="pe"><use href="#pe"/></svg></i><i class="B o" style="left:44px;top:45px;width:21px;height:20px"><svg class="pe"><use href="#pe"/></svg></i><i class="B o" style="left:77px;top:45px;width:21px;height:20px"><svg class="pe"><use href="#pe"/></svg></i><i class="s" style="left:12px;top:69px;width:21px"></i><i class="s" style="left:44px;top:69px;width:21px"></i><i class="s" style="left:77px;top:69px;width:21px"></i><i class="s" style="left:14px;top:73px;width:17px"></i><i class="s" style="left:46px;top:73px;width:17px"></i><i class="s" style="left:79px;top:73px;width:17px"></i><i class="dt" style="top:98px"></i></div>
</div>
<div class="r" style="top:2923px">
<div class="c x1"><i class="t" style="left:37px;top:19px;width:35px"></i><i class="s" style="left:43px;top:25px;width:23px"></i><i class="B o" style="left:6px;top:42px;width:19px;height:18px"><svg class="pe" style="width:12px;height:12px"><use href="#pe"/></svg></i><i class="B o" style="left:61px;top:42px;width:19px;height:18px"><svg class="pe" style="width:12px;height:12px"><use href="#pe"/></svg></i><i class="B o" style="left:6px;top:70px;width:19px;height:18px"><svg class="pe" style="width:12px;height:12px"><use href="#pe"/></svg></i><i class="B o" style="left:61px;top:70px;width:19px;height:18px"><svg class="pe" style="width:12px;height:12px"><use href="#pe"/></svg></i><i class="s" style="left:29px;top:47px;width:20px"></i><i class="s" style="left:29px;top:51px;width:16px"></i><i class="s" style="left:84px;top:47px;width:20px"></i><i class="s" style="left:84px;top:51px;width:16px"></i><i class="s" style="left:29px;top:75px;width:20px"></i><i class="s" style="left:29px;top:79px;width:16px"></i><i class="s" style="left:84px;top:75px;width:20px"></i><i class="s" style="left:84px;top:79px;width:16px"></i></div>
<div class="c x2"><i class="B" style="left:0;top:0;width:44px;height:109px"><svg class="im"><use href="#im"/></svg></i><i class="t" style="left:51px;top:31px;width:35px"></i><i class="s" style="left:51px;top:38px;width:23px"></i><i class="s" style="left:51px;top:51px;width:52px"></i><i class="s" style="left:51px;top:55px;width:52px"></i><i class="s" style="left:51px;top:59px;width:52px"></i><i class="s" style="left:51px;top:63px;width:52px"></i><i class="s" style="left:51px;top:67px;width:52px"></i><i class="s" style="left:51px;top:71px;width:52px"></i></div>
<div class="c x3"><i class="t" style="left:37px;top:26px;width:35px"></i><i class="s" style="left:43px;top:32px;width:23px"></i><i class="s" style="left:43px;top:36px;width:23px"></i><i class="B" style="left:6px;top:52px;width:17px;height:17px"><svg class="pe" style="width:11px;height:11px"><use href="#pe"/></svg></i><i class="B" style="left:32px;top:52px;width:17px;height:17px"><svg class="pe" style="width:11px;height:11px"><use href="#pe"/></svg></i><i class="B" style="left:59px;top:52px;width:17px;height:17px"><svg class="pe" style="width:11px;height:11px"><use href="#pe"/></svg></i><i class="B" style="left:85px;top:52px;width:17px;height:17px"><svg class="pe" style="width:11px;height:11px"><use href="#pe"/></svg></i><i class="s" style="left:6px;top:73px;width:17px"></i><i class="s" style="left:32px;top:73px;width:17px"></i><i class="s" style="left:59px;top:73px;width:17px"></i><i class="s" style="left:85px;top:73px;width:17px"></i></div>
<div class="c x4"><i class="B" style="left:0;top:0;width:109px;height:50px"><svg class="im"><use href="#im"/></svg></i><i class="t" style="left:37px;top:65px;width:35px"></i><i class="s" style="left:40px;top:72px;width:29px"></i><i class="b" style="left:37px;top:86px;width:35px;height:7px"></i></div>
</div>

<!-- TESTIMONIALS -->
<div class="lb" style="top:3053px">TESTIMONIALS</div>
<div class="r" style="top:3089px">
<div class="c x1"><i class="t" style="left:37px;top:19px;width:35px"></i><i class="B o" style="left:40px;top:40px;width:28px;height:28px"><svg class="im"><use href="#im"/></svg></i><i class="s" style="left:43px;top:86px;width:23px"></i><i class="s" style="left:43px;top:91px;width:23px"></i><b style="left:8px;top:48px;color:#ddd;font-size:10px;font-weight:normal">&lt;</b><b style="left:95px;top:48px;color:#ddd;font-size:10px;font-weight:normal">&gt;</b></div>
<div class="c x2"><i class="t" style="left:37px;top:9px;width:35px"></i><i class="B o" style="left:25px;top:37px;width:23px;height:23px"><svg class="im" style="width:12px;height:9px"><use href="#im"/></svg></i><i class="B o" style="left:60px;top:37px;width:23px;height:23px"><svg class="im" style="width:12px;height:9px"><use href="#im"/></svg></i><i class="s" style="left:27px;top:65px;width:19px"></i><i class="s" style="left:62px;top:65px;width:19px"></i><i class="s" style="left:27px;top:72px;width:19px"></i><i class="s" style="left:62px;top:72px;width:19px"></i><b style="left:8px;top:44px;color:#ddd;font-size:10px;font-weight:normal">&lt;</b><b style="left:95px;top:44px;color:#ddd;font-size:10px;font-weight:normal">&gt;</b><i class="dt" style="top:99px"></i></div>
<div class="c x3"><i class="B" style="left:5px;top:13px;width:44px;height:73px;border-radius:3px"><svg class="im"><use href="#im"/></svg></i><i class="t" style="left:56px;top:27px;width:35px"></i><i class="s" style="left:56px;top:33px;width:23px"></i><i class="s" style="left:56px;top:47px;width:47px"></i><i class="s" style="left:56px;top:51px;width:47px"></i><i class="s" style="left:56px;top:55px;width:47px"></i><i class="s" style="left:56px;top:59px;width:47px"></i><i class="s" style="left:56px;top:63px;width:47px"></i><i class="s" style="left:56px;top:67px;width:47px"></i><i class="dt" style="top:99px"></i></div>
<div class="c x4"><i class="t" style="left:37px;top:16px;width:35px"></i><i class="s" style="left:43px;top:23px;width:23px"></i><i class="B o" style="left:40px;top:40px;width:28px;height:28px"><svg class="im"><use href="#im"/></svg></i><i class="s" style="left:30px;top:74px;width:50px"></i><i class="s" style="left:33px;top:78px;width:44px"></i><b style="left:8px;top:48px;color:#ddd;font-size:10px;font-weight:normal">&lt;</b><b style="left:95px;top:48px;color:#ddd;font-size:10px;font-weight:normal">&gt;</b></div>
</div>
<div class="r" style="top:3212px">
<div class="c x1"><i class="s" style="left:30px;top:17px;width:50px"></i><i class="s" style="left:33px;top:21px;width:44px"></i><i class="B o" style="left:40px;top:35px;width:28px;height:28px"><svg class="im"><use href="#im"/></svg></i><i class="t" style="left:41px;top:72px;width:27px"></i><i class="s" style="left:45px;top:79px;width:19px"></i><i class="dt" style="top:98px"></i></div>
<div class="c x2"><i class="t" style="left:8px;top:15px;width:35px"></i><i class="s" style="left:8px;top:35px;width:52px"></i><i class="s" style="left:8px;top:39px;width:52px"></i><i class="s" style="left:8px;top:43px;width:52px"></i><i class="s" style="left:8px;top:47px;width:52px"></i><i class="s" style="left:8px;top:51px;width:52px"></i><i class="s" style="left:8px;top:55px;width:52px"></i><i class="B o" style="left:8px;top:74px;width:22px;height:21px"><svg class="im" style="width:12px;height:9px"><use href="#im"/></svg></i><b style="left:84px;top:78px;color:#ddd;font-size:10px;font-weight:normal">&lt;</b><b style="left:96px;top:78px;color:#ddd;font-size:10px;font-weight:normal">&gt;</b></div>
<div class="c x3"><i class="t" style="left:37px;top:19px;width:35px"></i><i class="s" style="left:43px;top:26px;width:23px"></i><i class="B o" style="left:6px;top:44px;width:19px;height:18px"><svg class="im" style="width:10px;height:8px"><use href="#im"/></svg></i><i class="B o" style="left:61px;top:44px;width:19px;height:18px"><svg class="im" style="width:10px;height:8px"><use href="#im"/></svg></i><i class="B o" style="left:6px;top:71px;width:19px;height:18px"><svg class="im" style="width:10px;height:8px"><use href="#im"/></svg></i><i class="B o" style="left:61px;top:71px;width:19px;height:18px"><svg class="im" style="width:10px;height:8px"><use href="#im"/></svg></i><i class="s" style="left:29px;top:49px;width:20px"></i><i class="s" style="left:29px;top:53px;width:16px"></i><i class="s" style="left:84px;top:49px;width:20px"></i><i class="s" style="left:84px;top:53px;width:16px"></i><i class="s" style="left:29px;top:76px;width:20px"></i><i class="s" style="left:29px;top:80px;width:16px"></i><i class="s" style="left:84px;top:76px;width:20px"></i><i class="s" style="left:84px;top:80px;width:16px"></i></div>
<div class="c x4"><svg class="ib" style="left:13px;top:45px"><use href="#im"/></svg><i class="t" style="left:50px;top:26px;width:35px"></i><i class="s" style="left:50px;top:33px;width:23px"></i><i class="s" style="left:50px;top:46px;width:51px"></i><i class="s" style="left:50px;top:50px;width:51px"></i><i class="s" style="left:50px;top:54px;width:51px"></i><i class="s" style="left:50px;top:58px;width:51px"></i><i class="s" style="left:50px;top:62px;width:51px"></i><i class="s" style="left:50px;top:66px;width:51px"></i><i class="dt" style="top:98px"></i></div>
</div>
<div class="r" style="top:3333px">
<div class="c x1"><i class="s" style="left:12px;top:17px;width:31px"></i><i class="s" style="left:14px;top:21px;width:27px"></i><i class="s" style="left:67px;top:17px;width:31px"></i><i class="s" style="left:69px;top:21px;width:27px"></i><i class="B o" style="left:13px;top:35px;width:28px;height:28px"><svg class="im"><use href="#im"/></svg></i><i class="B o" style="left:68px;top:35px;width:28px;height:28px"><svg class="im"><use href="#im"/></svg></i><i class="t" style="left:14px;top:72px;width:26px"></i><i class="t" style="left:69px;top:72px;width:26px"></i><i class="s" style="left:20px;top:79px;width:14px"></i><i class="s" style="left:75px;top:79px;width:14px"></i><i class="dt" style="top:98px"></i></div>
<div class="c x2"><i class="t" style="left:37px;top:8px;width:35px"></i><i class="B o" style="left:7px;top:21px;width:23px;height:22px"><svg class="im" style="width:12px;height:9px"><use href="#im"/></svg></i><i class="B o" style="left:43px;top:21px;width:23px;height:22px"><svg class="im" style="width:12px;height:9px"><use href="#im"/></svg></i><i class="B o" style="left:78px;top:21px;width:23px;height:22px"><svg class="im" style="width:12px;height:9px"><use href="#im"/></svg></i><i class="s" style="left:9px;top:47px;width:19px"></i><i class="s" style="left:45px;top:47px;width:19px"></i><i class="s" style="left:80px;top:47px;width:19px"></i><i class="B o" style="left:7px;top:66px;width:23px;height:22px"><svg class="im" style="width:12px;height:9px"><use href="#im"/></svg></i><i class="B o" style="left:43px;top:66px;width:23px;height:22px"><svg class="im" style="width:12px;height:9px"><use href="#im"/></svg></i><i class="B o" style="left:78px;top:66px;width:23px;height:22px"><svg class="im" style="width:12px;height:9px"><use href="#im"/></svg></i><i class="s" style="left:9px;top:93px;width:19px"></i><i class="s" style="left:45px;top:93px;width:19px"></i><i class="s" style="left:80px;top:93px;width:19px"></i></div>
<div class="c x3"><i class="t" style="left:37px;top:8px;width:35px"></i><i class="B" style="left:6px;top:26px;width:42px;height:35px;border-radius:3px"><svg class="im"><use href="#im"/></svg></i><i class="B" style="left:61px;top:26px;width:42px;height:35px;border-radius:3px"><svg class="im"><use href="#im"/></svg></i><i class="t" style="left:9px;top:70px;width:36px"></i><i class="t" style="left:64px;top:70px;width:36px"></i><i class="s" style="left:13px;top:77px;width:28px"></i><i class="s" style="left:68px;top:77px;width:28px"></i><i class="dt" style="top:98px"></i></div>
<div class="c x4"><svg class="ib" style="left:45px;top:35px;width:20px;height:15px"><use href="#im"/></svg><i class="t" style="left:37px;top:61px;width:35px"></i><i class="s" style="left:40px;top:68px;width:29px"></i><i class="s" style="left:40px;top:72px;width:29px"></i><b style="left:8px;top:48px;color:#ddd;font-size:10px;font-weight:normal">&lt;</b><b style="left:95px;top:48px;color:#ddd;font-size:10px;font-weight:normal">&gt;</b></div>
</div>

<!-- BLOG -->
<div class="lb" style="top:3464px">BLOG</div>
<div class="r" style="top:3502px">
<div class="c x1"><i class="B" style="left:0;top:0;width:44px;height:109px"><svg class="im"><use href="#im"/></svg></i><i class="t" style="left:51px;top:23px;width:35px"></i><i class="s" style="left:51px;top:30px;width:23px"></i><i class="s" style="left:51px;top:43px;width:52px"></i><i class="s" style="left:51px;top:47px;width:52px"></i><i class="s" style="left:51px;top:51px;width:52px"></i><i class="s" style="left:51px;top:55px;width:52px"></i><i class="s" style="left:51px;top:59px;width:52px"></i><i class="s" style="left:51px;top:63px;width:52px"></i><i class="b" style="left:51px;top:77px;width:35px;height:7px"></i></div>
<div class="c x2"><i class="s" style="left:48px;top:35px;width:13px"></i><i class="t" style="left:37px;top:45px;width:35px"></i><i class="s" style="left:40px;top:52px;width:29px"></i><i class="s" style="left:40px;top:56px;width:29px"></i><i class="b" style="left:37px;top:66px;width:35px;height:7px"></i></div>
<div class="c x3"><i class="t" style="left:37px;top:8px;width:35px"></i><i class="s" style="left:43px;top:14px;width:23px"></i><i class="B" style="left:11px;top:39px;width:21px;height:20px"><svg class="im" style="width:12px;height:9px"><use href="#im"/></svg></i><i class="B" style="left:44px;top:39px;width:21px;height:20px"><svg class="im" style="width:12px;height:9px"><use href="#im"/></svg></i><i class="B" style="left:77px;top:39px;width:21px;height:20px"><svg class="im" style="width:12px;height:9px"><use href="#im"/></svg></i><i class="s" style="left:11px;top:64px;width:21px"></i><i class="s" style="left:44px;top:64px;width:21px"></i><i class="s" style="left:77px;top:64px;width:21px"></i><i class="s" style="left:13px;top:69px;width:17px"></i><i class="s" style="left:46px;top:69px;width:17px"></i><i class="s" style="left:79px;top:69px;width:17px"></i><i class="b" style="left:11px;top:81px;width:21px"></i><i class="b" style="left:44px;top:81px;width:21px"></i><i class="b" style="left:77px;top:81px;width:21px"></i></div>
<div class="c x4"><i class="B" style="left:0;top:0;width:109px;height:56px"><svg class="im"><use href="#im"/></svg></i><i class="t" style="left:8px;top:69px;width:20px"></i><i class="s" style="left:8px;top:75px;width:93px"></i><i class="s" style="left:8px;top:79px;width:93px"></i><i class="b" style="left:8px;top:88px;width:35px;height:7px"></i></div>
</div>
<div class="r" style="top:3624px">
<div class="c x1"><i class="B" style="left:8px;top:9px;width:38px;height:35px"><svg class="im"><use href="#im"/></svg></i><i class="t" style="left:53px;top:13px;width:21px"></i><i class="s" style="left:53px;top:20px;width:48px"></i><i class="s" style="left:53px;top:24px;width:48px"></i><i class="b" style="left:53px;top:31px;width:35px"></i><i class="t" style="left:35px;top:67px;width:21px"></i><i class="s" style="left:8px;top:73px;width:48px"></i><i class="s" style="left:8px;top:77px;width:48px"></i><i class="b" style="left:21px;top:85px;width:35px"></i><i class="B" style="left:62px;top:63px;width:39px;height:35px"><svg class="im"><use href="#im"/></svg></i></div>
<div class="c x2"><i class="B" style="left:0;top:0;width:44px;height:109px"><svg class="im"><use href="#im"/></svg></i><i class="B o" style="left:51px;top:12px;width:14px;height:11px"></i><i class="t" style="left:51px;top:34px;width:35px"></i><i class="s" style="left:51px;top:41px;width:23px"></i><i class="s" style="left:51px;top:54px;width:52px"></i><i class="s" style="left:51px;top:58px;width:52px"></i><i class="s" style="left:51px;top:62px;width:52px"></i><i class="s" style="left:51px;top:66px;width:52px"></i><i class="s" style="left:51px;top:70px;width:52px"></i><i class="b" style="left:51px;top:87px;width:35px"></i></div>
<div class="c x3"><i class="B" style="left:0;top:0;width:109px;height:54px"><svg class="im"><use href="#im"/></svg></i><i class="t" style="left:8px;top:64px;width:21px"></i><i class="s" style="left:8px;top:70px;width:93px"></i><i class="s" style="left:8px;top:74px;width:93px"></i><i class="B o" style="left:8px;top:86px;width:13px;height:11px"></i><i class="b" style="left:66px;top:89px;width:35px"></i></div>
<div class="c x4"><i class="s" style="left:14px;top:26px;width:12px"></i><i class="s" style="left:48px;top:26px;width:12px"></i><i class="s" style="left:82px;top:26px;width:12px"></i><i class="t" style="left:8px;top:35px;width:25px"></i><i class="t" style="left:42px;top:35px;width:25px"></i><i class="t" style="left:76px;top:35px;width:25px"></i><i class="s" style="left:10px;top:40px;width:21px"></i><i class="s" style="left:44px;top:40px;width:21px"></i><i class="s" style="left:78px;top:40px;width:21px"></i><i class="s" style="left:10px;top:44px;width:21px"></i><i class="s" style="left:44px;top:44px;width:21px"></i><i class="s" style="left:78px;top:44px;width:21px"></i><i class="s" style="left:14px;top:60px;width:12px"></i><i class="s" style="left:48px;top:60px;width:12px"></i><i class="s" style="left:82px;top:60px;width:12px"></i><i class="t" style="left:8px;top:70px;width:25px"></i><i class="t" style="left:42px;top:70px;width:25px"></i><i class="t" style="left:76px;top:70px;width:25px"></i><i class="s" style="left:10px;top:75px;width:21px"></i><i class="s" style="left:44px;top:75px;width:21px"></i><i class="s" style="left:78px;top:75px;width:21px"></i></div>
</div>
<div class="r" style="top:3745px">
<div class="c x1"><i class="s" style="left:8px;top:21px;width:12px"></i><i class="s" style="left:42px;top:21px;width:12px"></i><i class="s" style="left:76px;top:21px;width:12px"></i><i class="t" style="left:8px;top:30px;width:25px"></i><i class="t" style="left:42px;top:30px;width:25px"></i><i class="t" style="left:76px;top:30px;width:25px"></i><i class="s" style="left:8px;top:35px;width:18px"></i><i class="s" style="left:42px;top:35px;width:18px"></i><i class="s" style="left:76px;top:35px;width:18px"></i><i class="s" style="left:8px;top:39px;width:18px"></i><i class="s" style="left:42px;top:39px;width:18px"></i><i class="s" style="left:76px;top:39px;width:18px"></i><i class="s" style="left:8px;top:56px;width:12px"></i><i class="s" style="left:42px;top:56px;width:12px"></i><i class="s" style="left:76px;top:56px;width:12px"></i><i class="t" style="left:8px;top:66px;width:25px"></i><i class="t" style="left:42px;top:66px;width:25px"></i><i class="t" style="left:76px;top:66px;width:25px"></i><i class="s" style="left:8px;top:71px;width:18px"></i><i class="s" style="left:42px;top:71px;width:18px"></i><i class="s" style="left:76px;top:71px;width:18px"></i><i class="dt" style="top:99px"></i></div>
<div class="c x2"><i class="t" style="left:37px;top:8px;width:35px"></i><i class="s" style="left:40px;top:14px;width:29px"></i><i class="B" style="left:8px;top:31px;width:38px;height:35px"><svg class="im"><use href="#im"/></svg></i><i class="B" style="left:62px;top:31px;width:38px;height:35px"><svg class="im"><use href="#im"/></svg></i><i class="s" style="left:8px;top:71px;width:38px"></i><i class="s" style="left:62px;top:71px;width:38px"></i><i class="s" style="left:8px;top:75px;width:38px"></i><i class="s" style="left:62px;top:75px;width:38px"></i><i class="B o" style="left:10px;top:86px;width:14px;height:11px"></i><i class="B o" style="left:64px;top:86px;width:14px;height:11px"></i></div>
<div class="c x3"><i class="B" style="left:0;top:0;width:109px;height:37px"><svg class="im"><use href="#im"/></svg></i><i class="t" style="left:8px;top:44px;width:21px"></i><i class="s" style="left:8px;top:51px;width:93px"></i><i class="s" style="left:8px;top:55px;width:93px"></i><i class="s" style="left:8px;top:59px;width:93px"></i><i class="s" style="left:8px;top:63px;width:93px"></i><i class="s" style="left:8px;top:67px;width:93px"></i><i class="s" style="left:8px;top:71px;width:93px"></i><i class="s" style="left:8px;top:75px;width:93px"></i><i class="s" style="left:8px;top:79px;width:93px"></i><i class="B o" style="left:8px;top:93px;width:13px;height:11px"></i><i class="b" style="left:72px;top:95px;width:29px"></i></div>
<div class="c x4"><i class="B" style="left:0;top:0;width:109px;height:37px"><svg class="im"><use href="#im"/></svg></i><i class="t" style="left:8px;top:44px;width:21px"></i><i class="s" style="left:8px;top:51px;width:68px"></i><i class="s" style="left:8px;top:55px;width:68px"></i><i class="s" style="left:8px;top:59px;width:68px"></i><i class="s" style="left:8px;top:63px;width:68px"></i><i class="s" style="left:8px;top:67px;width:68px"></i><i class="s" style="left:8px;top:71px;width:68px"></i><i class="s" style="left:8px;top:75px;width:68px"></i><i class="s" style="left:8px;top:79px;width:68px"></i><i class="B" style="left:84px;top:41px;width:17px;height:13px"></i><i class="B" style="left:84px;top:74px;width:17px;height:13px"></i><i class="s" style="left:84px;top:60px;width:17px"></i><i class="s" style="left:84px;top:93px;width:17px"></i><i class="B o" style="left:8px;top:93px;width:13px;height:11px"></i></div>
</div>

<!-- E COMMERCE -->
<div class="lb" style="top:3876px">E COMMERCE</div>
<div class="r" style="top:3912px">
<div class="c x1"><i class="t" style="left:37px;top:8px;width:35px"></i><i class="s" style="left:40px;top:14px;width:29px"></i><i class="B" style="left:9px;top:32px;width:38px;height:35px"><svg class="sh"><use href="#sh"/></svg></i><i class="B" style="left:63px;top:32px;width:38px;height:35px"><svg class="sh"><use href="#sh"/></svg></i><i class="s" style="left:11px;top:73px;width:34px"></i><i class="s" style="left:65px;top:73px;width:34px"></i><i class="s" style="left:11px;top:77px;width:34px"></i><i class="s" style="left:65px;top:77px;width:34px"></i><i class="b" style="left:11px;top:91px;width:35px;height:7px"></i><i class="b" style="left:65px;top:91px;width:35px;height:7px"></i></div>
<div class="c x2"><i class="t" style="left:37px;top:15px;width:35px"></i><i class="s" style="left:43px;top:21px;width:23px"></i><i class="B" style="left:11px;top:42px;width:21px;height:20px"><svg class="sh" style="width:13px;height:11px"><use href="#sh"/></svg></i><i class="B" style="left:44px;top:42px;width:21px;height:20px"><svg class="sh" style="width:13px;height:11px"><use href="#sh"/></svg></i><i class="B" style="left:77px;top:42px;width:21px;height:20px"><svg class="sh" style="width:13px;height:11px"><use href="#sh"/></svg></i><i class="s" style="left:11px;top:66px;width:21px"></i><i class="s" style="left:44px;top:66px;width:21px"></i><i class="s" style="left:77px;top:66px;width:21px"></i><i class="b" style="left:11px;top:82px;width:21px"></i><i class="b" style="left:44px;top:82px;width:21px"></i><i class="b" style="left:77px;top:82px;width:21px"></i></div>
<div class="c x3"><i class="B" style="left:8px;top:10px;width:39px;height:35px"><svg class="sh"><use href="#sh"/></svg></i><i class="t" style="left:53px;top:14px;width:21px"></i><i class="s" style="left:53px;top:21px;width:48px"></i><i class="s" style="left:53px;top:25px;width:48px"></i><i class="b" style="left:53px;top:35px;width:35px"></i><i class="B" style="left:8px;top:64px;width:39px;height:35px"><svg class="sh"><use href="#sh"/></svg></i><i class="t" style="left:53px;top:69px;width:21px"></i><i class="s" style="left:53px;top:75px;width:48px"></i><i class="s" style="left:53px;top:79px;width:48px"></i><i class="b" style="left:53px;top:89px;width:35px"></i></div>
<div class="c x4"><i class="B" style="left:8px;top:10px;width:39px;height:35px"><svg class="sh"><use href="#sh"/></svg></i><i class="t" style="left:53px;top:14px;width:21px"></i><i class="s" style="left:53px;top:21px;width:48px"></i><i class="s" style="left:53px;top:25px;width:48px"></i><i class="b" style="left:53px;top:35px;width:35px"></i><i class="B" style="left:12px;top:59px;width:21px;height:20px"><svg class="sh" style="width:13px;height:11px"><use href="#sh"/></svg></i><i class="B" style="left:44px;top:59px;width:21px;height:20px"><svg class="sh" style="width:13px;height:11px"><use href="#sh"/></svg></i><i class="B" style="left:77px;top:59px;width:21px;height:20px"><svg class="sh" style="width:13px;height:11px"><use href="#sh"/></svg></i><i class="s" style="left:12px;top:84px;width:21px"></i><i class="s" style="left:44px;top:84px;width:21px"></i><i class="s" style="left:77px;top:84px;width:21px"></i><i class="s" style="left:14px;top:88px;width:17px"></i><i class="s" style="left:46px;top:88px;width:17px"></i><i class="s" style="left:79px;top:88px;width:17px"></i></div>
</div>
<div class="r" style="top:4034px">
<div class="c x1"><i class="B" style="left:4px;top:3px;width:101px;height:45px"><svg class="sh" style="width:32px;height:27px"><use href="#sh"/></svg></i><i class="B" style="left:5px;top:53px;width:13px;height:12px"></i><i class="B" style="left:23px;top:53px;width:13px;height:12px"></i><i class="B" style="left:41px;top:53px;width:13px;height:12px"></i><i class="B" style="left:59px;top:53px;width:13px;height:12px"></i><i class="B" style="left:77px;top:53px;width:13px;height:12px"></i><i class="t" style="left:4px;top:73px;width:20px"></i><i class="s" style="left:4px;top:80px;width:101px"></i><i class="s" style="left:4px;top:84px;width:101px"></i><i class="b" style="left:4px;top:94px;width:35px;height:7px"></i></div>
<div class="c x2"><i class="B" style="left:15px;top:13px;width:79px;height:46px"><svg class="sh" style="width:32px;height:27px"><use href="#sh"/></svg></i><b style="left:4px;top:29px;color:#ddd;font-size:10px;font-weight:normal">&lt;</b><b style="left:98px;top:29px;color:#ddd;font-size:10px;font-weight:normal">&gt;</b><i class="t" style="left:37px;top:69px;width:35px"></i><i class="s" style="left:20px;top:75px;width:69px"></i><i class="s" style="left:24px;top:79px;width:61px"></i><i class="b" style="left:37px;top:89px;width:35px;height:7px"></i></div>
<div class="c x3"><i class="t" style="left:38px;top:8px;width:31px"></i><i class="s" style="left:43px;top:15px;width:23px"></i><i class="t" style="left:8px;top:43px;width:21px"></i><i class="s" style="left:8px;top:50px;width:48px"></i><i class="s" style="left:8px;top:54px;width:48px"></i><i class="b" style="left:8px;top:63px;width:35px;height:7px"></i><i class="B" style="left:62px;top:40px;width:39px;height:35px"><svg class="sh"><use href="#sh"/></svg></i><i class="dt" style="top:99px"></i></div>
<div class="c x4"><i class="w" style="left:4px;top:4px;width:26px;height:101px;border-color:#eee"></i><i class="t" style="left:7px;top:7px;width:10px;height:1px"></i><i class="s" style="left:7px;top:11px;width:20px"></i><i class="s" style="left:7px;top:15px;width:20px"></i><i class="s" style="left:7px;top:19px;width:20px"></i><i class="s" style="left:7px;top:23px;width:20px"></i><i class="s" style="left:7px;top:27px;width:20px"></i><i class="t" style="left:7px;top:41px;width:10px;height:1px"></i><i class="s" style="left:7px;top:45px;width:20px"></i><i class="s" style="left:7px;top:49px;width:20px"></i><i class="s" style="left:7px;top:53px;width:20px"></i><i class="s" style="left:7px;top:57px;width:20px"></i><i class="t" style="left:7px;top:74px;width:10px;height:1px"></i><i class="s" style="left:7px;top:78px;width:20px"></i><i class="s" style="left:7px;top:82px;width:20px"></i><i class="s" style="left:7px;top:86px;width:20px"></i><i class="s" style="left:7px;top:90px;width:20px"></i>
<i class="B" style="left:36px;top:8px;width:17px;height:15px"><svg class="sh" style="width:11px;height:9px"><use href="#sh"/></svg></i><i class="B" style="left:62px;top:8px;width:17px;height:15px"><svg class="sh" style="width:11px;height:9px"><use href="#sh"/></svg></i><i class="B" style="left:87px;top:8px;width:17px;height:15px"><svg class="sh" style="width:11px;height:9px"><use href="#sh"/></svg></i><i class="B" style="left:36px;top:40px;width:17px;height:15px"><svg class="sh" style="width:11px;height:9px"><use href="#sh"/></svg></i><i class="B" style="left:62px;top:40px;width:17px;height:15px"><svg class="sh" style="width:11px;height:9px"><use href="#sh"/></svg></i><i class="B" style="left:87px;top:40px;width:17px;height:15px"><svg class="sh" style="width:11px;height:9px"><use href="#sh"/></svg></i><i class="B" style="left:36px;top:73px;width:17px;height:15px"><svg class="sh" style="width:11px;height:9px"><use href="#sh"/></svg></i><i class="B" style="left:62px;top:73px;width:17px;height:15px"><svg class="sh" style="width:11px;height:9px"><use href="#sh"/></svg></i><i class="B" style="left:87px;top:73px;width:17px;height:15px"><svg class="sh" style="width:11px;height:9px"><use href="#sh"/></svg></i><i class="s" style="left:36px;top:27px;width:17px"></i><i class="s" style="left:62px;top:27px;width:17px"></i><i class="s" style="left:87px;top:27px;width:17px"></i><i class="s" style="left:36px;top:59px;width:17px"></i><i class="s" style="left:62px;top:59px;width:17px"></i><i class="s" style="left:87px;top:59px;width:17px"></i><i class="s" style="left:36px;top:92px;width:17px"></i><i class="s" style="left:62px;top:92px;width:17px"></i><i class="s" style="left:87px;top:92px;width:17px"></i></div>
</div>
<div class="r" style="top:4156px">
<div class="c x1"><i class="s" style="left:13px;top:10px;width:84px"></i><i class="B o" style="left:10px;top:7px;width:6px;height:6px"></i><i class="g o" style="left:51px;top:7px;width:6px;height:6px"></i><i class="g o" style="left:94px;top:7px;width:6px;height:6px;background:#e5e5e5"></i><i class="B" style="left:8px;top:26px;width:12px;height:11px"><svg class="sh" style="width:8px;height:7px"><use href="#sh"/></svg></i><i class="B" style="left:8px;top:38px;width:12px;height:11px"><svg class="sh" style="width:8px;height:7px"><use href="#sh"/></svg></i><i class="B" style="left:8px;top:50px;width:12px;height:11px"><svg class="sh" style="width:8px;height:7px"><use href="#sh"/></svg></i><i class="s" style="left:27px;top:28px;width:12px"></i><i class="s" style="left:27px;top:32px;width:40px"></i><i class="s" style="left:27px;top:40px;width:12px"></i><i class="s" style="left:27px;top:44px;width:40px"></i><i class="s" style="left:27px;top:52px;width:12px"></i><i class="s" style="left:27px;top:56px;width:40px"></i><i class="x" style="left:91px;top:28px"></i><i class="x" style="left:91px;top:40px"></i><i class="x" style="left:91px;top:52px"></i><i class="b" style="left:37px;top:93px;width:35px;height:7px"></i></div>
<div class="c x2"><i style="left:13px;top:10px;width:84px;height:1px;background:#9fdffe"></i><i class="B o" style="left:10px;top:7px;width:6px;height:6px"></i><i class="B o" style="left:51px;top:7px;width:6px;height:6px"></i><i class="g o" style="left:94px;top:7px;width:6px;height:6px;background:#e5e5e5"></i><i class="B" style="left:19px;top:33px;width:71px;height:7px"></i><i class="w" style="left:19px;top:33px;width:71px;height:28px;background:transparent"></i><i class="w" style="left:22px;top:44px;width:30px;height:5px"></i><i class="w" style="left:56px;top:44px;width:31px;height:5px"></i><i class="w" style="left:22px;top:53px;width:20px;height:5px"></i><i class="w" style="left:45px;top:53px;width:18px;height:5px"></i><i class="w" style="left:66px;top:53px;width:21px;height:5px"></i><i class="b" style="left:37px;top:93px;width:35px;height:7px"></i></div>
<div class="c x3"><i style="left:13px;top:10px;width:84px;height:1px;background:#9fdffe"></i><i class="B o" style="left:10px;top:7px;width:6px;height:6px"></i><i class="B o" style="left:51px;top:7px;width:6px;height:6px"></i><i class="B o" style="left:94px;top:7px;width:6px;height:6px"></i><i class="f" style="left:12px;top:31px;width:85px"></i><i class="f" style="left:12px;top:43px;width:40px"></i><i class="f" style="left:57px;top:43px;width:40px"></i><i class="f" style="left:12px;top:55px;width:85px"></i><i class="f" style="left:12px;top:67px;width:58px"></i><i class="f" style="left:75px;top:67px;width:22px"></i><i class="b" style="left:37px;top:93px;width:35px;height:7px"></i></div>
<div class="c x4"><svg style="left:39px;top:17px;width:31px;height:31px"><use href="#chk"/></svg><i class="t" style="left:40px;top:61px;width:28px"></i><i class="s" style="left:21px;top:66px;width:67px"></i><i class="s" style="left:25px;top:70px;width:59px"></i><i class="b" style="left:37px;top:83px;width:35px;height:7px"></i></div>
</div>

<!-- OTHER -->
<div class="lb" style="top:4288px">OTHER</div>
<div class="r" style="top:4324px">
<div class="c x1"><i class="w" style="left:14px;top:12px;width:27px;height:84px;border-color:#eee"></i><i class="w" style="left:69px;top:12px;width:27px;height:84px;border-color:#eee"></i><i class="w" style="left:41px;top:10px;width:28px;height:90px"></i><i class="t" style="left:21px;top:18px;width:13px"></i><i class="t" style="left:48px;top:15px;width:13px"></i><i class="t" style="left:76px;top:18px;width:13px"></i><i style="left:17px;top:24px;width:21px;height:18px;background:repeating-linear-gradient(#ddd 0 1px,transparent 1px 3px)"></i><i style="left:44px;top:21px;width:22px;height:50px;background:repeating-linear-gradient(#ddd 0 1px,transparent 1px 3px)"></i><i style="left:72px;top:24px;width:21px;height:70px;background:repeating-linear-gradient(#ddd 0 1px,transparent 1px 3px)"></i></div>
<div class="c x2"><i class="s" style="left:14px;top:7px;width:12px;background:#999"></i><i class="s" style="left:49px;top:7px;width:12px;background:#999"></i><i class="s" style="left:83px;top:7px;width:12px;background:#999"></i><i class="w" style="left:7px;top:13px;width:26px;height:76px;border-color:#eee"></i><i class="w" style="left:41px;top:13px;width:26px;height:76px;border-color:#eee"></i><i class="w" style="left:76px;top:13px;width:26px;height:76px;border-color:#eee"></i><i style="left:9px;top:16px;width:22px;height:18px;background:repeating-linear-gradient(#ddd 0 1px,transparent 1px 3px)"></i><i style="left:43px;top:16px;width:22px;height:38px;background:repeating-linear-gradient(#ddd 0 1px,transparent 1px 3px)"></i><i style="left:78px;top:16px;width:22px;height:70px;background:repeating-linear-gradient(#ddd 0 1px,transparent 1px 3px)"></i><i class="b" style="left:8px;top:94px;width:23px;height:7px"></i><i class="b" style="left:43px;top:94px;width:23px;height:7px"></i><i class="b" style="left:77px;top:94px;width:23px;height:7px"></i></div>
<div class="c x3"><i class="t" style="left:37px;top:8px;width:35px"></i><i class="s" style="left:43px;top:14px;width:23px"></i><i class="s" style="left:11px;top:25px;width:10px;background:#999"></i><i class="s" style="left:36px;top:25px;width:10px;background:#999"></i><i class="s" style="left:61px;top:25px;width:10px;background:#999"></i><i class="s" style="left:86px;top:25px;width:10px;background:#999"></i><i class="w" style="left:5px;top:30px;width:22px;height:60px;border-color:#eee"></i><i class="w" style="left:30px;top:30px;width:22px;height:60px;border-color:#eee"></i><i class="B" style="left:56px;top:30px;width:21px;height:60px;border-radius:2px"></i><i class="w" style="left:81px;top:30px;width:22px;height:60px;border-color:#eee"></i><i style="left:7px;top:33px;width:18px;height:20px;background:repeating-linear-gradient(#ddd 0 1px,transparent 1px 3px)"></i><i style="left:32px;top:33px;width:18px;height:25px;background:repeating-linear-gradient(#ddd 0 1px,transparent 1px 3px)"></i><i style="left:58px;top:33px;width:17px;height:40px;background:repeating-linear-gradient(#fff 0 1px,transparent 1px 3px)"></i><i style="left:83px;top:33px;width:18px;height:40px;background:repeating-linear-gradient(#ddd 0 1px,transparent 1px 3px)"></i><i class="b" style="left:7px;top:94px;width:18px;height:7px"></i><i class="b" style="left:32px;top:94px;width:18px;height:7px"></i><i class="b" style="left:57px;top:94px;width:19px;height:7px"></i><i class="b" style="left:83px;top:94px;width:18px;height:7px"></i></div>
<div class="c x4"><i class="B" style="left:0;top:12px;width:3px;height:63px"></i><i class="B" style="left:105px;top:12px;width:4px;height:63px"></i><i class="B" style="left:10px;top:12px;width:89px;height:63px"><svg class="pl" style="width:19px;height:19px"><use href="#pl"/></svg></i><i class="t" style="left:33px;top:85px;width:43px"></i><i class="s" style="left:35px;top:91px;width:39px"></i><i class="s" style="left:35px;top:95px;width:39px"></i></div>
</div>
<div class="r" style="top:4446px">
<div class="c x1"><i class="B" style="left:0;top:0;width:109px;height:102px"><svg class="pl" style="width:20px;height:20px"><use href="#pl"/></svg></i><i class="x" style="left:96px;top:4px;border-color:#fff"></i><i class="g" style="left:2px;top:104px;width:104px;height:2px"></i><i style="left:2px;top:104px;width:62px;height:2px;background:#888"></i></div>
<div class="c x2"><i class="x" style="left:91px;top:10px"></i><i class="B" style="left:9px;top:25px;width:91px;height:46px;border-radius:2px"><svg class="iL"><use href="#im"/></svg></i><i class="B" style="left:9px;top:75px;width:30px;height:23px"><svg class="im" style="width:13px;height:10px"><use href="#im"/></svg></i><i class="B" style="left:41px;top:75px;width:29px;height:23px"><svg class="im" style="width:13px;height:10px"><use href="#im"/></svg></i><i class="B" style="left:72px;top:75px;width:28px;height:23px"><svg class="im" style="width:13px;height:10px"><use href="#im"/></svg></i></div>
<div class="c x3" style="background:#888;border-color:#888"><i class="x" style="left:96px;top:4px;border-color:#ddd"></i><svg style="left:44px;top:34px;width:20px;height:20px"><use href="#srch"/></svg><i style="left:12px;top:65px;width:47px;height:6px;border:1px solid #ddd"></i><i class="b" style="left:64px;top:65px;width:33px"></i></div>
<div class="c x4"><b style="left:0;top:32px;width:108px;text-align:center;font-size:30px;line-height:34px;font-weight:normal;color:#777">404</b><i class="b" style="left:37px;top:82px;width:35px;height:7px"></i></div>
</div>
<div class="r" style="top:4568px">
<div class="c x1"><i class="t" style="left:37px;top:8px;width:35px"></i><i class="s" style="left:43px;top:14px;width:23px"></i><i class="B" style="left:7px;top:22px;width:24px;height:17px"><svg class="im" style="width:12px;height:9px"><use href="#im"/></svg></i><i class="B" style="left:42px;top:22px;width:24px;height:17px"><svg class="im" style="width:12px;height:9px"><use href="#im"/></svg></i><i class="B" style="left:79px;top:22px;width:24px;height:17px"><svg class="im" style="width:12px;height:9px"><use href="#im"/></svg></i><i class="s" style="left:9px;top:44px;width:20px"></i><i class="s" style="left:44px;top:44px;width:20px"></i><i class="s" style="left:81px;top:44px;width:20px"></i><i class="B" style="left:7px;top:57px;width:24px;height:17px"><svg class="im" style="width:12px;height:9px"><use href="#im"/></svg></i><i class="B" style="left:42px;top:57px;width:24px;height:17px"><svg class="im" style="width:12px;height:9px"><use href="#im"/></svg></i><i style="left:79px;top:57px;width:24px;height:17px;border:1px solid #40c4ff;color:#40c4ff;font-size:12px;line-height:14px;text-align:center;font-style:normal">+</i><i class="s" style="left:9px;top:79px;width:20px"></i><i class="s" style="left:44px;top:79px;width:20px"></i><i class="b" style="left:37px;top:94px;width:35px;height:7px"></i></div>
<div class="c x2"><i class="t" style="left:37px;top:8px;width:35px"></i><i class="s" style="left:43px;top:14px;width:23px"></i><i class="o" style="left:4px;top:39px;width:30px;height:30px;border:5px solid #888;border-right-color:#ddd;border-top-color:#ddd"></i><i class="o" style="left:39px;top:39px;width:30px;height:30px;border:5px solid #888;border-top-color:#ddd"></i><i class="o" style="left:74px;top:39px;width:30px;height:30px;border:5px solid #888;border-right-color:#ddd"></i><i class="b" style="left:37px;top:94px;width:35px;height:7px"></i></div>
<div class="c x3"><i class="s" style="left:7px;top:8px;width:1px;height:95px"></i><i class="g" style="left:16px;top:15px;width:7px;height:88px"></i><i style="left:16px;top:24px;width:7px;height:79px;background:#888"></i><i class="g" style="left:31px;top:24px;width:7px;height:79px"></i><i style="left:31px;top:33px;width:7px;height:70px;background:#888"></i><i class="g" style="left:46px;top:39px;width:7px;height:64px"></i><i style="left:46px;top:48px;width:7px;height:55px;background:#888"></i><i class="g" style="left:61px;top:54px;width:7px;height:49px"></i><i style="left:61px;top:63px;width:7px;height:40px;background:#888"></i><i class="g" style="left:76px;top:64px;width:7px;height:39px"></i><i style="left:76px;top:71px;width:7px;height:32px;background:#888"></i><i class="g" style="left:91px;top:71px;width:7px;height:32px"></i><i style="left:91px;top:79px;width:7px;height:24px;background:#888"></i></div>
<div class="c x4"><i class="w" style="left:4px;top:4px;width:26px;height:101px;border-color:#eee"></i><i class="t" style="left:7px;top:7px;width:10px;height:1px"></i><i style="left:7px;top:11px;width:20px;height:18px;background:repeating-linear-gradient(#ddd 0 1px,transparent 1px 3px)"></i><i class="t" style="left:7px;top:41px;width:10px;height:1px"></i><i style="left:7px;top:45px;width:20px;height:16px;background:repeating-linear-gradient(#ddd 0 1px,transparent 1px 3px)"></i><i class="t" style="left:7px;top:74px;width:10px;height:1px"></i><i style="left:7px;top:78px;width:20px;height:20px;background:repeating-linear-gradient(#ddd 0 1px,transparent 1px 3px)"></i><i class="B" style="left:36px;top:8px;width:21px;height:12px"><svg class="im" style="width:10px;height:7px"><use href="#im"/></svg></i><i class="B" style="left:61px;top:8px;width:21px;height:12px"><svg class="im" style="width:10px;height:7px"><use href="#im"/></svg></i><i class="B" style="left:88px;top:8px;width:16px;height:12px"><svg class="pl" style="width:8px;height:8px"><use href="#pl"/></svg></i><i class="B" style="left:36px;top:40px;width:46px;height:12px"><svg class="pl" style="width:8px;height:8px"><use href="#pl"/></svg></i><i class="B" style="left:88px;top:40px;width:16px;height:12px"><svg class="im" style="width:10px;height:7px"><use href="#im"/></svg></i><i class="B" style="left:36px;top:72px;width:21px;height:12px"><svg class="im" style="width:10px;height:7px"><use href="#im"/></svg></i><i class="B" style="left:61px;top:72px;width:43px;height:12px"><svg class="pl" style="width:8px;height:8px"><use href="#pl"/></svg></i><i class="s" style="left:36px;top:24px;width:21px"></i><i class="s" style="left:61px;top:24px;width:21px"></i><i class="s" style="left:88px;top:24px;width:16px"></i><i class="s" style="left:48px;top:56px;width:22px"></i><i class="s" style="left:88px;top:56px;width:16px"></i><i class="s" style="left:36px;top:88px;width:21px"></i><i class="s" style="left:72px;top:88px;width:22px"></i></div>
</div>
<div class="r" style="top:4689px">
<div class="c x1"><i class="g" style="left:7px;top:6px;width:95px;height:96px"></i></div>
<div class="c x2"><i class="g" style="left:7px;top:6px;width:45px;height:96px"></i><i class="g" style="left:57px;top:6px;width:45px;height:96px"></i></div>
<div class="c x3"><i class="g" style="left:7px;top:6px;width:27px;height:96px"></i><i class="g" style="left:41px;top:6px;width:27px;height:96px"></i><i class="g" style="left:75px;top:6px;width:27px;height:96px"></i></div>
<div class="c x4"><i class="g" style="left:7px;top:6px;width:19px;height:96px"></i><i class="g" style="left:32px;top:6px;width:19px;height:96px"></i><i class="g" style="left:58px;top:6px;width:19px;height:96px"></i><i class="g" style="left:83px;top:6px;width:19px;height:96px"></i></div>
</div>
</body></html>
